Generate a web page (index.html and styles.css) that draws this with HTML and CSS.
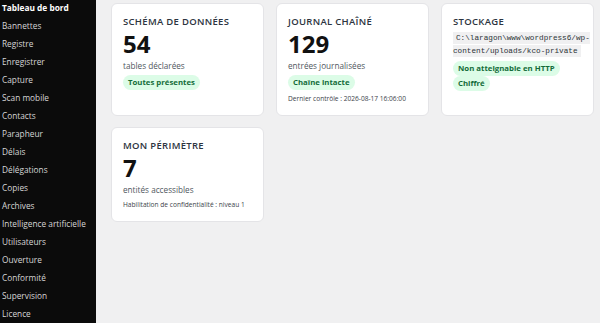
FILE: index.html
```html
<!DOCTYPE html>
<html lang="fr">
<head>
    <meta charset="UTF-8">
    <meta name="viewport" content="width=device-width, initial-scale=1.0">
    <title>Tableau de bord</title>
    <link rel="stylesheet" href="styles.css">
</head>
<body>
    <nav class="sidebar">
        <ul class="menu">
            <li class="active">Tableau de bord</li>
            <li>Bannettes</li>
            <li>Registre</li>
            <li>Enregistrer</li>
            <li>Capture</li>
            <li>Scan mobile</li>
            <li>Contacts</li>
            <li>Parapheur</li>
            <li>Délais</li>
            <li>Délégations</li>
            <li>Copies</li>
            <li>Archives</li>
            <li>Intelligence artificielle</li>
            <li>Utilisateurs</li>
            <li>Ouverture</li>
            <li>Conformité</li>
            <li>Supervision</li>
            <li>Licence</li>
        </ul>
    </nav>

    <main class="content">
        <div class="cards">
            <div class="card">
                <h2>Schéma de données</h2>
                <div class="big">54</div>
                <div class="label">tables déclarées</div>
                <div class="badges">
                    <span class="badge">Toutes présentes</span>
                </div>
            </div>

            <div class="card">
                <h2>Journal chaîné</h2>
                <div class="big">129</div>
                <div class="label">entrées journalisées</div>
                <div class="badges">
                    <span class="badge">Chaîne intacte</span>
                </div>
                <div class="note">Dernier contrôle : 2026-08-17 16:06:00</div>
            </div>

            <div class="card">
                <h2>Stockage</h2>
                <div class="path"><code>C:\laragon\www\wordpress6/wp-content/uploads/kco-private</code></div>
                <div class="badges">
                    <span class="badge">Non atteignable en HTTP</span>
                    <span class="badge">Chiffré</span>
                </div>
            </div>

            <div class="card">
                <h2>Mon périmètre</h2>
                <div class="big">7</div>
                <div class="label">entités accessibles</div>
                <div class="note">Habilitation de confidentialité : niveau 1</div>
            </div>
        </div>
    </main>
</body>
</html>
```

FILE: styles.css
```css
html, body {
    height: 100%;
}
body {
    margin: 0;
    display: flex;
    font-family: "Open Sans", "Noto Sans", sans-serif;
    background-color: #f0f0f1;
    color: #333;
    overflow: hidden;
}
.sidebar {
    width: 96px;
    flex-shrink: 0;
    background-color: #0b0b0b;
}
.menu {
    list-style: none;
    margin: 0;
    padding: 0;
}
.menu li {
    font-size: 8.3px;
    line-height: 12px;
    padding: 2px 2px 4px;
    color: #d6d6d6;
    white-space: nowrap;
}
.menu li.active {
    color: #fff;
    font-weight: 700;
}
.content {
    flex: 1;
    min-width: 0;
    padding: 3px 6px 0 15px;
}
.cards {
    display: grid;
    grid-template-columns: repeat(3, minmax(0, 1fr));
    gap: 11px 12px;
}
.card {
    background-color: #fff;
    border: 1px solid #e4e4e7;
    border-radius: 6px;
    padding: 11px 11px 12px;
}
.card h2 {
    margin: 0;
    font-size: 9.5px;
    line-height: 13px;
    font-weight: 600;
    letter-spacing: 0.3px;
    text-transform: uppercase;
    color: #2c3440;
}
.big {
    margin-top: 1px;
    font-size: 24px;
    line-height: 29px;
    font-weight: 700;
    color: #111;
}
.label {
    margin-top: 2px;
    font-size: 8.2px;
    line-height: 12px;
    color: #50575e;
}
.badges {
    display: flex;
    flex-wrap: wrap;
    align-items: flex-start;
    gap: 0 4px;
    margin-top: 3px;
}
.badge {
    display: inline-block;
    background-color: #dcfce7;
    color: #146c3a;
    font-size: 7.8px;
    font-weight: 700;
    line-height: 15px;
    padding: 0 5px;
    border-radius: 8px;
}
.note {
    margin-top: 4px;
    font-size: 6.6px;
    line-height: 9px;
    color: #3c434a;
}
.path {
    margin-top: 4px;
    font-family: "Liberation Mono", monospace;
    font-size: 7.7px;
    line-height: 13px;
}
.path code {
    font-family: inherit;
    background-color: #f0f0f1;
    color: #2c3338;
    padding: 2px 3px;
}
```
